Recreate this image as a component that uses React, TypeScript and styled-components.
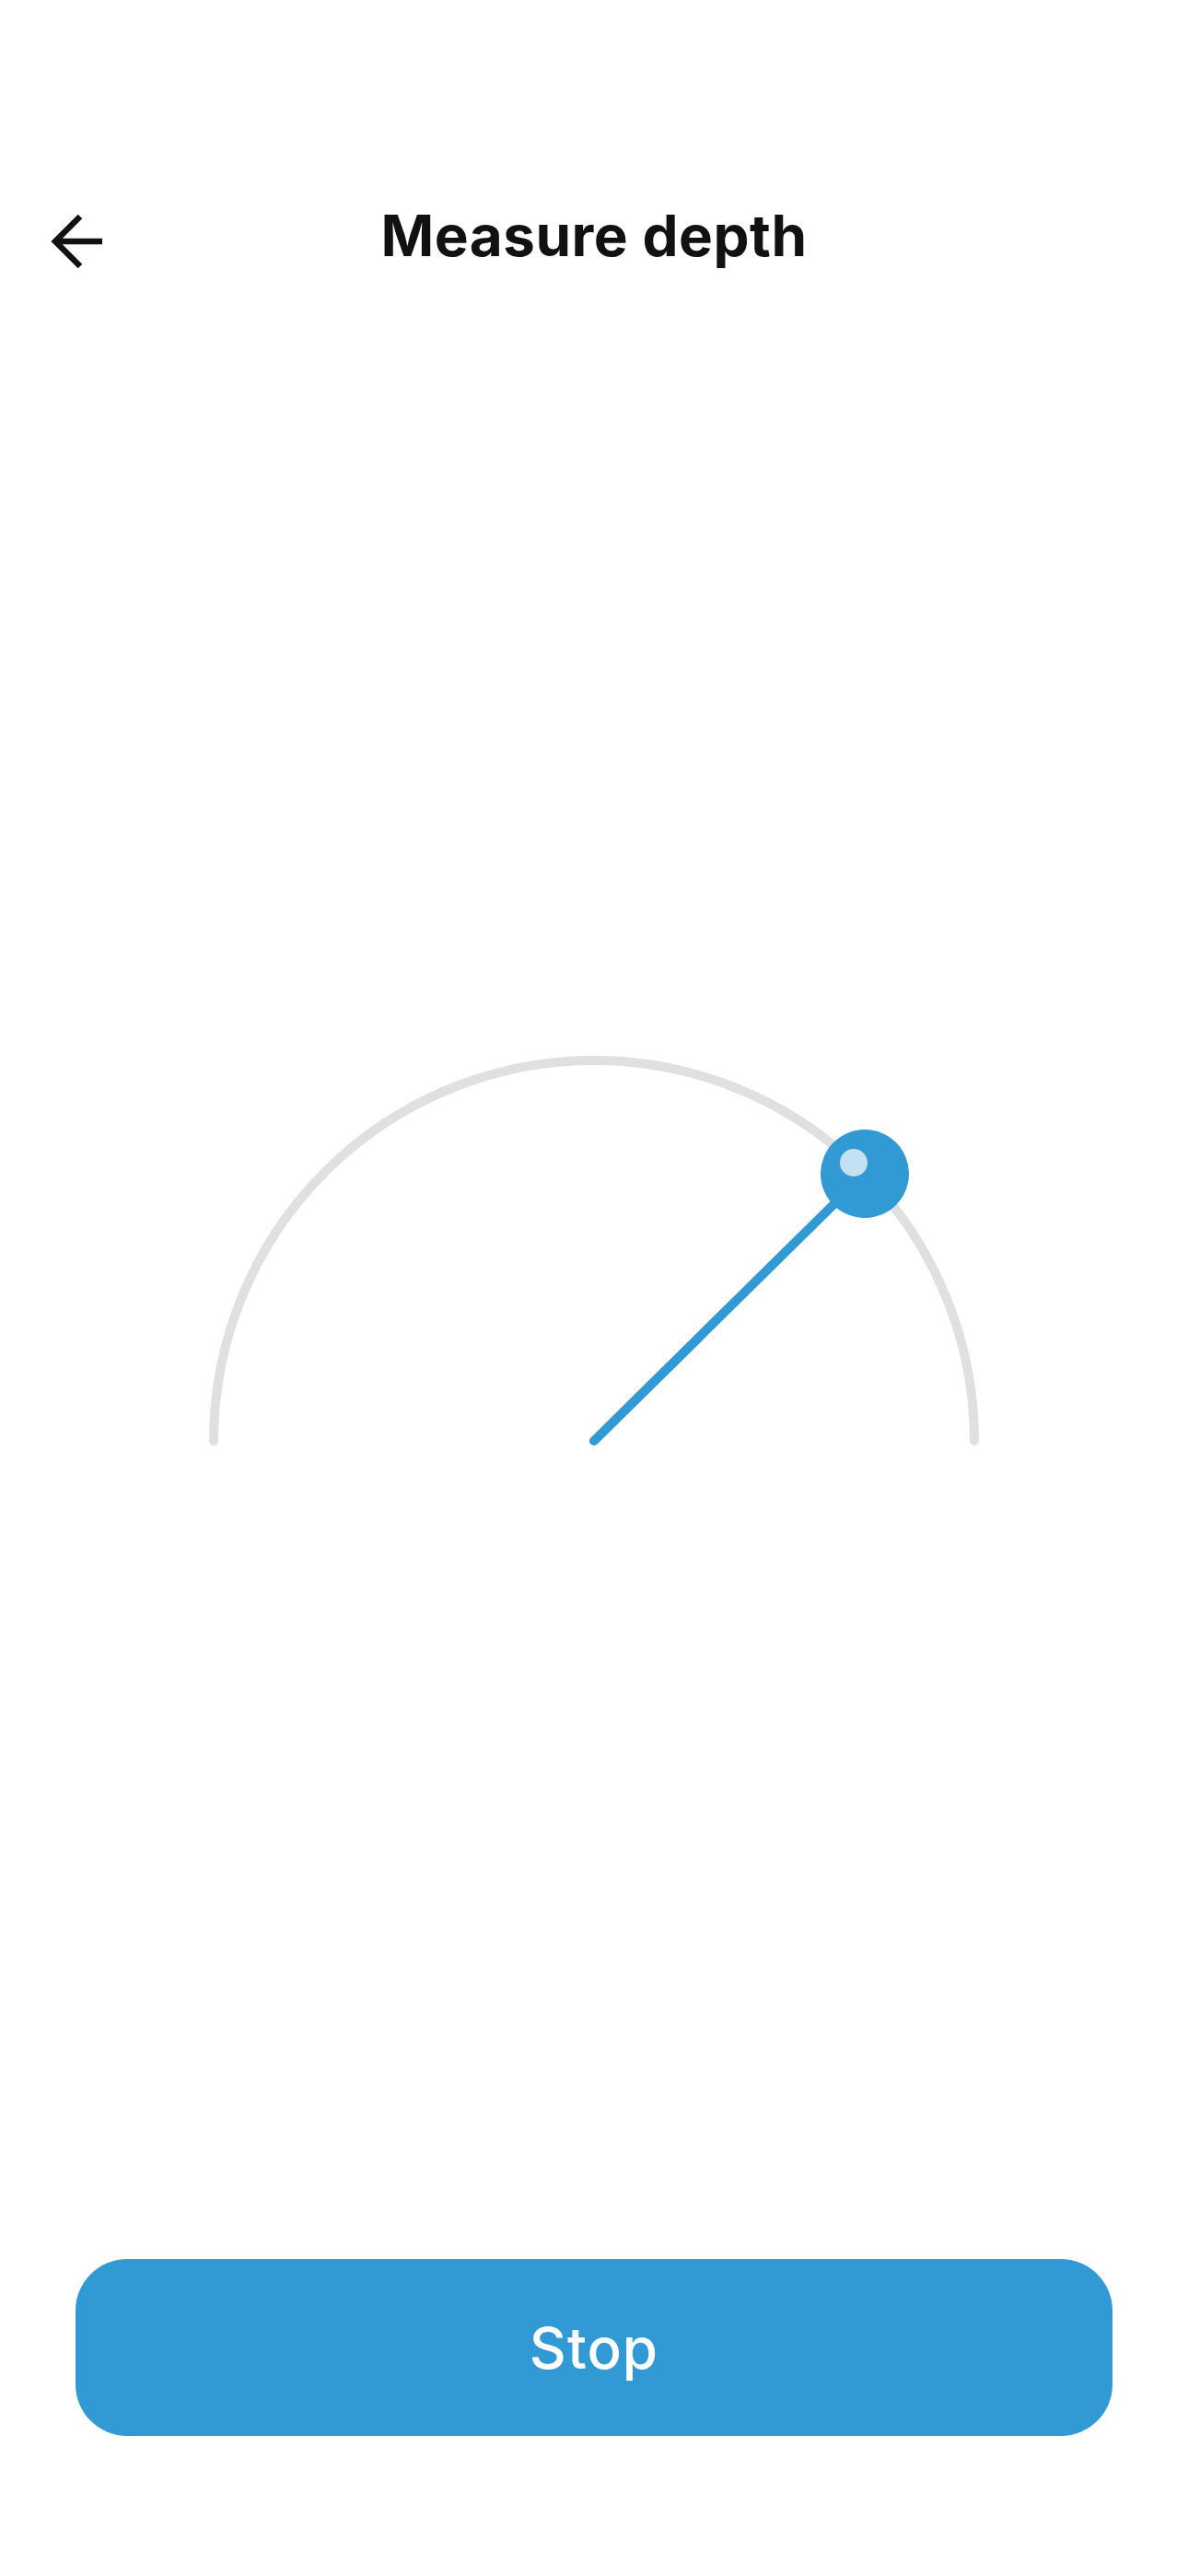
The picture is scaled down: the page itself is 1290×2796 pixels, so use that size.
import React from "react";
import styled, { createGlobalStyle } from "styled-components";

const GlobalStyle = createGlobalStyle`
  html, body {
    margin: 0;
    padding: 0;
    background: #ffffff;
  }
  body {
    font-family: Inter, "Noto Sans", "Liberation Sans", sans-serif;
    -webkit-font-smoothing: antialiased;
  }
`;

const Page = styled.div`
  width: 1290px;
  min-height: 2796px;
  display: flex;
  flex-direction: column;
  background: #ffffff;
  box-sizing: border-box;
`;

const Header = styled.header`
  margin-top: 180px;
  height: 152px;
  display: grid;
  grid-template-columns: 1fr auto 1fr;
  align-items: center;
`;

const BackButton = styled.button`
  justify-self: start;
  margin-left: 52px;
  margin-top: 12px;
  width: 64px;
  height: 64px;
  padding: 0;
  border: none;
  background: transparent;
  display: flex;
  align-items: center;
  justify-content: center;
  cursor: pointer;
`;

const Title = styled.h1`
  margin: 0;
  font-family: Inter, "Noto Sans", "Liberation Sans", sans-serif;
  font-size: 62px;
  font-weight: 700;
  letter-spacing: 0.5px;
  color: #111111;
  line-height: 1.2;
  text-align: center;
`;

const Main = styled.main`
  flex: 1;
  display: flex;
  flex-direction: column;
  align-items: center;
  padding-top: 807px;
`;

const GaugeSvg = styled.svg`
  display: block;
  width: 860px;
  height: 440px;
`;

const Footer = styled.footer`
  padding: 0 82px 152px;
`;

const StopButton = styled.button`
  width: 100%;
  height: 192px;
  border: none;
  border-radius: 56px;
  background: #3199d4;
  color: #ffffff;
  font-family: Inter, "Noto Sans", "Liberation Sans", sans-serif;
  font-size: 62px;
  font-weight: 500;
  letter-spacing: 1px;
  cursor: pointer;
`;

const ArrowLeftIcon = () => (
  <svg width="64" height="64" viewBox="0 0 64 64" fill="none">
    <path
      d="M59 32H10M35 5L8 32l27 27"
      stroke="#111111"
      strokeWidth="6.5"
      strokeLinecap="butt"
      strokeLinejoin="miter"
    />
  </svg>
);

const Gauge = () => {
  const cx = 430;
  const cy = 425;
  const r = 413;
  const kx = 724;
  const ky = 135;
  return (
    <GaugeSvg viewBox="0 0 860 440">
      <path
        d={`M ${cx - r} ${cy} A ${r} ${r} 0 0 1 ${cx + r} ${cy}`}
        fill="none"
        stroke="#e0e0e0"
        strokeWidth="10"
        strokeLinecap="round"
      />
      <line
        x1={cx}
        y1={cy}
        x2={kx}
        y2={ky}
        stroke="#3199d4"
        strokeWidth="10"
        strokeLinecap="round"
      />
      <circle cx={kx} cy={ky} r="48" fill="#3199d4" />
      <circle cx={kx - 12} cy={ky - 12} r="15" fill="#c4e1f3" />
    </GaugeSvg>
  );
};

export default function App() {
  return (
    <>
      <GlobalStyle />
      <Page>
        <Header>
          <BackButton aria-label="Back">
            <ArrowLeftIcon />
          </BackButton>
          <Title>Measure depth</Title>
          <div />
        </Header>
        <Main>
          <Gauge />
        </Main>
        <Footer>
          <StopButton>Stop</StopButton>
        </Footer>
      </Page>
    </>
  );
}
